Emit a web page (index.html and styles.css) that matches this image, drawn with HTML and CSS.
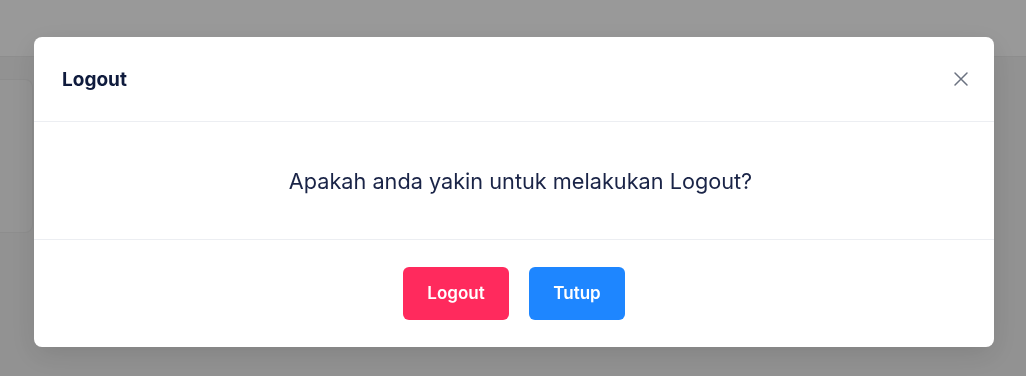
FILE: index.html
```html
<!DOCTYPE html>
<html lang="id">
<head>
  <meta charset="UTF-8" />
  <title>Logout</title>
  <link rel="stylesheet" href="styles.css">
</head>
<body>
  <header class="topbar"></header>
  <div class="page">
    <div class="card"></div>
  </div>

  <!-- MODAL LOGOUT -->
  <div class="overlay">
    <div class="modal">
      <div class="modal-header">
        <h3>Logout</h3>
        <button class="close-btn" aria-label="Tutup">
          <svg width="16" height="16" viewBox="0 0 16 16">
            <path d="M2 2 L14 14 M14 2 L2 14" stroke="#6b7280" stroke-width="1.5" stroke-linecap="round" fill="none"/>
          </svg>
        </button>
      </div>
      <div class="modal-body">
        <p>Apakah anda yakin untuk melakukan Logout?</p>
      </div>
      <div class="modal-footer">
        <button class="btn btn-logout">Logout</button>
        <button class="btn btn-close">Tutup</button>
      </div>
    </div>
  </div>
</body>
</html>
```

FILE: styles.css
```css
body {
  margin: 0;
  height: 100vh;
  font-family: Inter, "Noto Sans", Arial, sans-serif;
  background: #f4f4f4;
  color: #1a2447;
  overflow: hidden;
}

.topbar {
  height: 57px;
  background: #fff;
  border-bottom: 1px solid #ececec;
  box-sizing: border-box;
}

.page {
  padding-top: 22px;
}

.card {
  width: 33px;
  height: 154px;
  background: #f8f8f8;
  border: 1px solid #ececec;
  border-left: none;
  border-radius: 0 8px 8px 0;
  box-sizing: border-box;
}

.overlay {
  position: fixed;
  top: 0; left: 0; right: 0; bottom: 0;
  background: rgba(0, 0, 0, 0.4);
  display: flex;
  justify-content: center;
  align-items: flex-start;
  padding-top: 37px;
  box-sizing: border-box;
}

.modal {
  width: 960px;
  margin-left: 2px;
  background: #fff;
  border-radius: 8px;
  box-shadow: 0 8px 28px rgba(0, 0, 0, 0.12);
}

.modal-header {
  display: flex;
  align-items: center;
  justify-content: space-between;
  height: 84px;
  padding: 0 25px 0 28px;
  border-bottom: 1px solid #eceef2;
}

.modal-header h3 {
  margin: 0;
  font-size: 19px;
  font-weight: 700;
  color: #0f1b3d;
}

.close-btn {
  background: none;
  border: none;
  padding: 0;
  width: 16px;
  height: 16px;
  cursor: pointer;
}

.modal-body {
  height: 117px;
  display: flex;
  align-items: center;
  justify-content: center;
  padding-left: 13px;
  border-bottom: 1px solid #eceef2;
}

.modal-body p {
  margin: 0;
  font-size: 21.7px;
  color: #1a2447;
}

.modal-footer {
  display: flex;
  justify-content: center;
  gap: 20px;
  padding: 27px 0;
}

.btn {
  border: none;
  border-radius: 6px;
  color: #fff;
  font-family: inherit;
  font-size: 17px;
  font-weight: 600;
  line-height: 25px;
  padding: 14px 0;
  cursor: pointer;
}

.btn-logout {
  width: 106px;
  background: #ff2a5d;
}

.btn-close {
  width: 96px;
  background: #1e86ff;
}
```
